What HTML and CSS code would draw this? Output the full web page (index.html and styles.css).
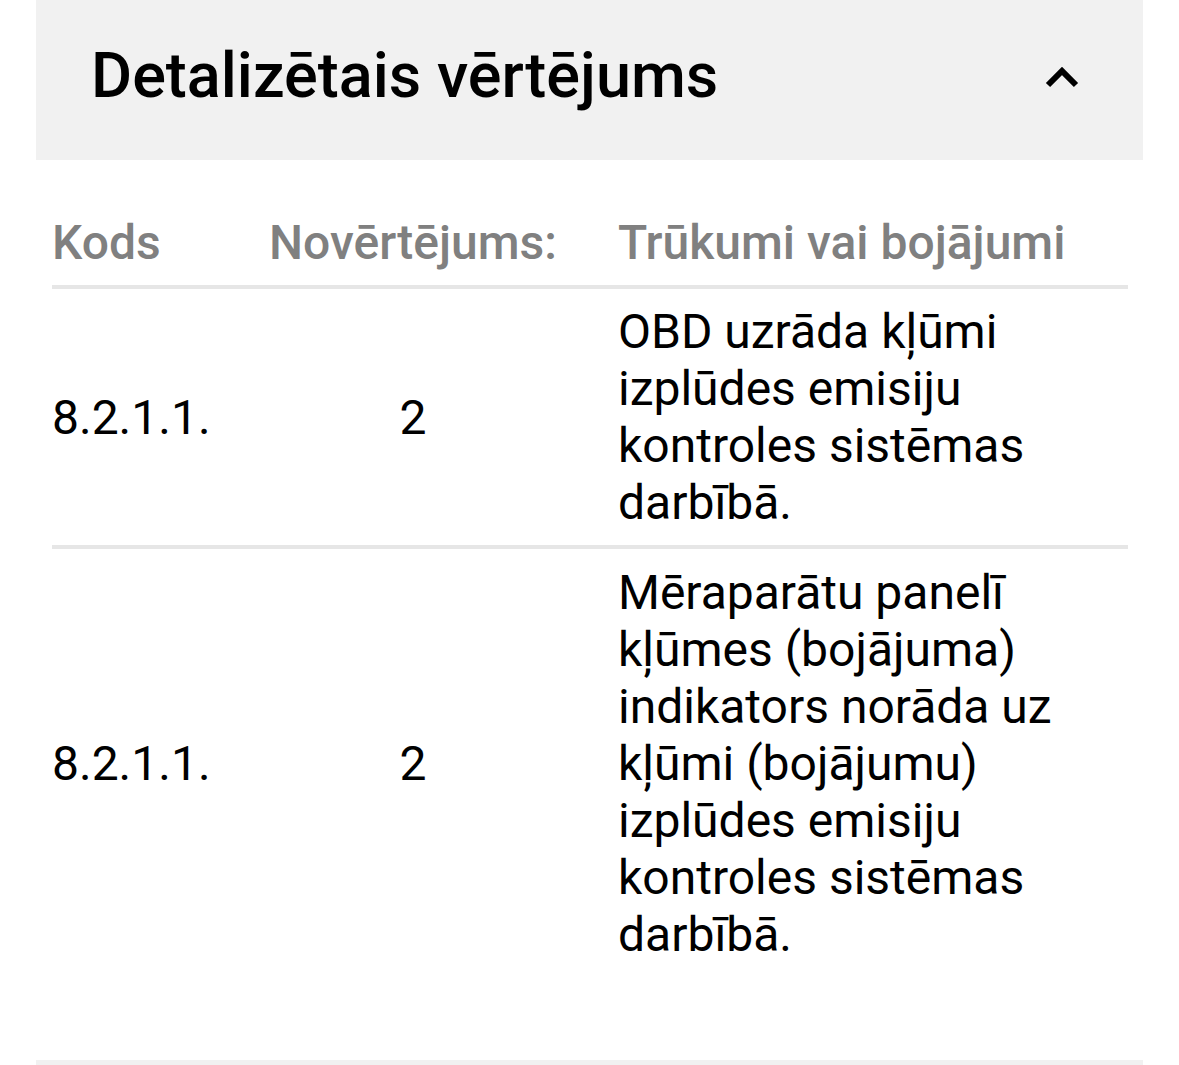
FILE: index.html
```html
<!DOCTYPE html>
<html lang="lv">
<head>
    <meta charset="UTF-8">
    <meta name="viewport" content="width=device-width, initial-scale=1.0">
    <title>Detalizētais vērtējums</title>
    <link rel="stylesheet" href="styles.css">
</head>
<body>
    <div class="panel">
        <div class="panel-head">
            <h2>Detalizētais vērtējums</h2>
            <svg class="chevron" width="34" height="22" viewBox="0 0 34 22">
                <path d="M3 18 L17 4 L31 18" fill="none" stroke="#000" stroke-width="6"/>
            </svg>
        </div>
        <div class="table">
            <div class="row head">
                <div class="cell code">Kods</div>
                <div class="cell grade">Novērtējums:</div>
                <div class="cell desc">Trūkumi vai bojājumi</div>
            </div>
            <div class="row">
                <div class="cell code">8.2.1.1.</div>
                <div class="cell grade">2</div>
                <div class="cell desc">OBD uzrāda kļūmi izplūdes emisiju kontroles sistēmas darbībā.</div>
            </div>
            <div class="row last">
                <div class="cell code">8.2.1.1.</div>
                <div class="cell grade">2</div>
                <div class="cell desc">Mēraparātu panelī kļūmes (bojājuma) indikators norāda uz kļūmi (bojājumu) izplūdes emisiju kontroles sistēmas darbībā.</div>
            </div>
        </div>
        <div class="panel-foot"></div>
    </div>
</body>
</html>
```

FILE: styles.css
```css
body {
    margin: 0;
    background-color: #fff;
    font-family: Roboto, "Noto Sans", sans-serif;
    color: #000;
}

.panel {
    margin: 0 36px;
}

.panel-head {
    display: flex;
    align-items: center;
    justify-content: space-between;
    height: 160px;
    padding: 0 64px 0 55px;
    background-color: #f1f1f1;
    box-sizing: border-box;
}

.panel-head h2 {
    margin: 0;
    font-size: 63px;
    font-weight: 500;
    line-height: 1;
    padding-bottom: 10px;
}

.chevron {
    display: block;
    margin-bottom: 4px;
}

.table {
    margin: 40px 15px 0 16px;
    padding-bottom: 83px;
}

.row {
    display: grid;
    grid-template-columns: 156px 316px 1fr;
    column-gap: 47px;
    align-items: center;
    padding: 14px 0;
    border-bottom: 4px solid #e6e6e6;
    font-size: 48px;
    line-height: 57px;
}

.row.last {
    border-bottom: none;
    padding-top: 15px;
}

.row.head {
    color: #808080;
    font-weight: 500;
}

.grade {
    text-align: center;
}

.panel-foot {
    height: 6px;
    background-color: #f1f1f1;
}
```
